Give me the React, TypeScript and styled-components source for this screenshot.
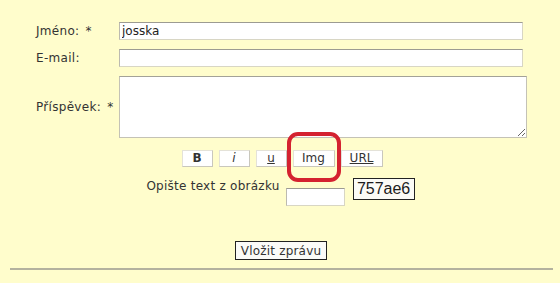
import React from "react";
import styled, { createGlobalStyle } from "styled-components";

const GlobalStyle = createGlobalStyle`
  html, body {
    margin: 0;
    padding: 0;
    background: #fffdcc;
  }
  body {
    font-family: "DejaVu Sans", Verdana, sans-serif;
    color: #333;
  }
`;

const Page = styled.div`
  width: 560px;
  height: 283px;
  overflow: hidden;
  padding-top: 22px;
  box-sizing: border-box;
  background: #fffdcc;
`;

const Field = styled.div<{ $gap?: number }>`
  display: flex;
  align-items: center;
  padding-left: 36px;
  margin-bottom: ${(p) => p.$gap ?? 9}px;
`;

const Label = styled.label`
  width: 83px;
  flex-shrink: 0;
  font-size: 12px;
  letter-spacing: 0.3px;
  word-spacing: 2px;
  color: #333;
`;

const TextInput = styled.input`
  box-sizing: border-box;
  width: ${(p) => p.width ?? 404}px;
  height: 18px;
  padding: 0 2px;
  margin: 0;
  border: 1px solid #d8d6c4;
  border-top-color: #9c9b92;
  border-left-color: #bcbab0;
  background: #fff;
  font-family: "DejaVu Sans", Verdana, sans-serif;
  font-size: 12px;
  color: #222;
  outline: none;
`;

const TextArea = styled.textarea`
  box-sizing: border-box;
  width: 408px;
  height: 62px;
  margin: 0;
  border: 1px solid #c4c2b6;
  border-top-color: #a3a298;
  background: #fff;
  resize: both;
`;

const Toolbar = styled.div`
  display: flex;
  justify-content: center;
  gap: 6px;
  padding-left: 4px;
  margin-bottom: 8px;
`;

const ToolButton = styled.button<{ $w: number; $bold?: boolean; $italic?: boolean; $under?: boolean }>`
  box-sizing: border-box;
  width: ${(p) => p.$w}px;
  height: 17px;
  margin: 0;
  padding: 0;
  background: #fff;
  border: 1px solid #e4e2d8;
  border-right-color: #c9c7bc;
  border-bottom-color: #c9c7bc;
  font-family: "DejaVu Sans", Verdana, sans-serif;
  font-size: 12px;
  line-height: 15px;
  color: #333;
  font-weight: ${(p) => (p.$bold ? 700 : 400)};
  font-style: ${(p) => (p.$italic ? "italic" : "normal")};
  text-decoration: ${(p) => (p.$under ? "underline" : "none")};
`;

const Marked = styled.span`
  position: relative;
  display: inline-flex;
`;

const Ring = styled.span`
  position: absolute;
  left: -6px;
  right: -6px;
  top: -18px;
  bottom: -15px;
  border: 4px solid #d42230;
  border-radius: 11px;
  pointer-events: none;
`;

const CaptchaRow = styled.div`
  display: flex;
  justify-content: center;
  align-items: flex-start;
  padding-left: 1px;
`;

const CaptchaText = styled.span`
  font-size: 12px;
  letter-spacing: 0.25px;
  line-height: 14px;
  margin-top: 4px;
  margin-right: 6px;
`;

const CaptchaImage = styled.div`
  box-sizing: border-box;
  width: 62px;
  height: 22px;
  margin-left: 8px;
  margin-top: 3px;
  border: 1px solid #222;
  background: #fbfbf6;
  font-family: "Liberation Sans", Arial, sans-serif;
  font-size: 16px;
  line-height: 20px;
  text-align: center;
  color: #1c1c1c;
`;

const SubmitRow = styled.div`
  display: flex;
  justify-content: center;
  margin-top: 35px;
  padding-left: 2px;
`;

const Submit = styled.button`
  box-sizing: border-box;
  height: 19px;
  padding: 0 5px;
  margin: 0;
  border: 1px solid #222;
  background: #fbfbf8;
  font-family: "DejaVu Sans", Verdana, sans-serif;
  font-size: 12px;
  letter-spacing: 0.2px;
  color: #333;
`;

const Rule = styled.div`
  height: 2px;
  margin: 8px 7px 0 10px;
  background: #b4b29e;
`;

export default function App() {
  return (
    <Page>
      <GlobalStyle />
      <Field>
        <Label>Jméno: *</Label>
        <TextInput defaultValue="josska" />
      </Field>
      <Field>
        <Label>E-mail:</Label>
        <TextInput />
      </Field>
      <Field $gap={12}>
        <Label>Příspěvek: *</Label>
        <TextArea />
      </Field>
      <Toolbar>
        <ToolButton $w={31} $bold>B</ToolButton>
        <ToolButton $w={31} $italic>i</ToolButton>
        <ToolButton $w={31} $under>u</ToolButton>
        <Marked>
          <ToolButton $w={42}>Img</ToolButton>
          <Ring />
        </Marked>
        <ToolButton $w={42} $under>URL</ToolButton>
      </Toolbar>
      <CaptchaRow>
        <CaptchaText>Opište text z obrázku</CaptchaText>
        <TextInput width={59} style={{ marginTop: 13 }} />
        <CaptchaImage>757ae6</CaptchaImage>
      </CaptchaRow>
      <SubmitRow>
        <Submit>Vložit zprávu</Submit>
      </SubmitRow>
      <Rule />
    </Page>
  );
}
